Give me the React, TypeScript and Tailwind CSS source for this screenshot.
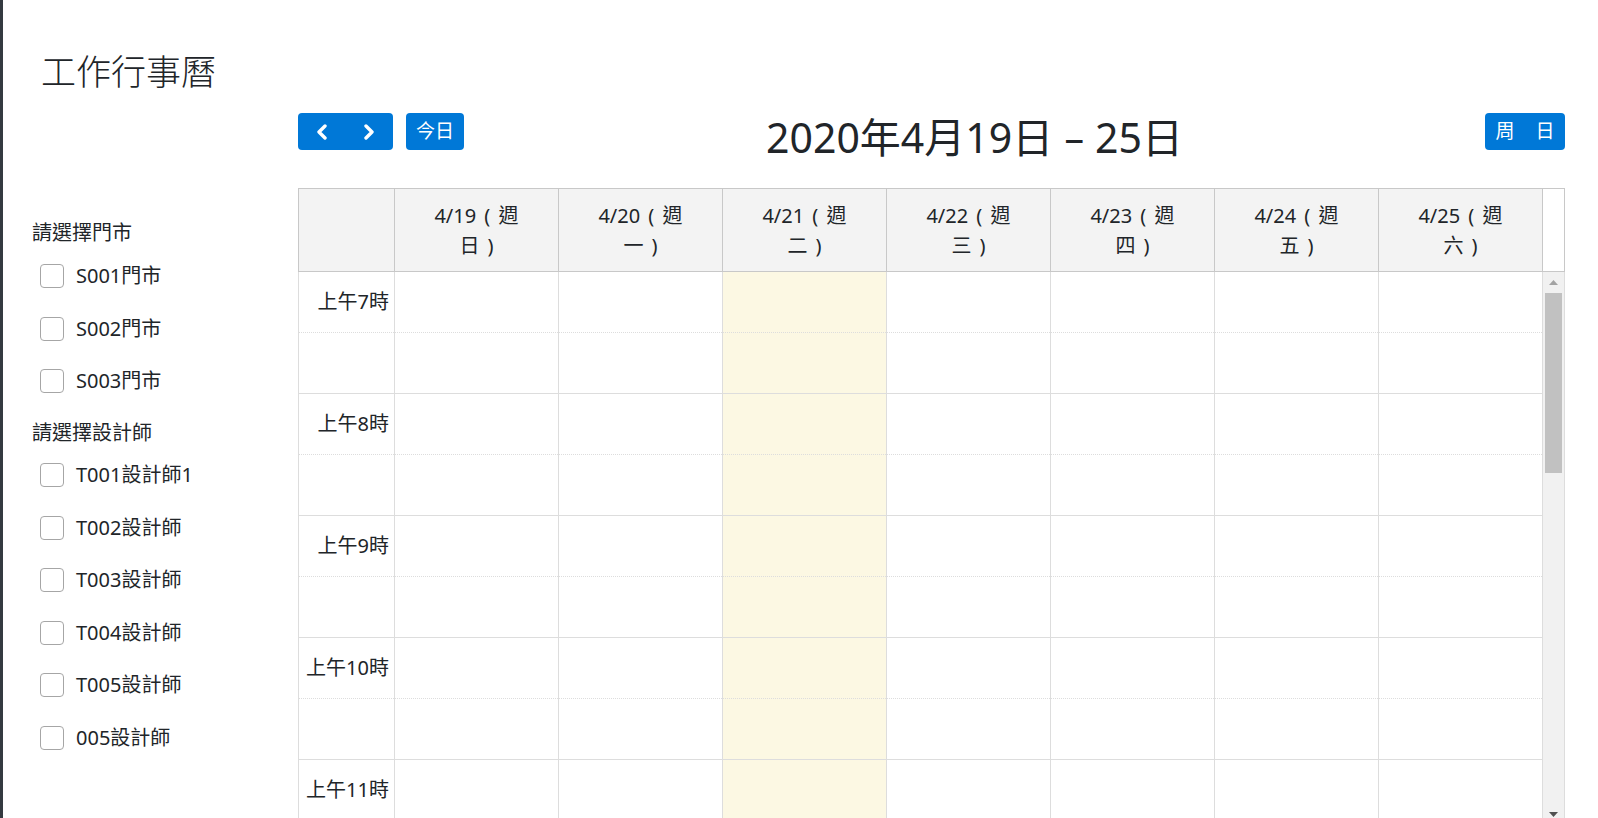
import React from "react";

const days: { l1: string; l2: string; today?: boolean }[] = [
  { l1: "4/19 ( 週", l2: "日 )" },
  { l1: "4/20 ( 週", l2: "一 )" },
  { l1: "4/21 ( 週", l2: "二 )", today: true },
  { l1: "4/22 ( 週", l2: "三 )" },
  { l1: "4/23 ( 週", l2: "四 )" },
  { l1: "4/24 ( 週", l2: "五 )" },
  { l1: "4/25 ( 週", l2: "六 )" },
];

const hours = [7, 8, 9, 10, 11];

const stores = ["S001門市", "S002門市", "S003門市"];
const designers = ["T001設計師1", "T002設計師", "T003設計師", "T004設計師", "T005設計師", "005設計師"];

function CheckItem({ label }: { label: string }) {
  return (
    <label className="flex h-[52.6px] items-center pl-[8px]">
      <span className="h-[24px] w-[24px] shrink-0 rounded-[4px] border border-[#a6a6a6] bg-white" />
      <span className="ml-[12px] text-[20px] leading-[30px]">{label}</span>
    </label>
  );
}

function Chevron({ dir }: { dir: "l" | "r" }) {
  return (
    <svg width="12" height="16" viewBox="0 0 12 16" fill="none">
      <polyline
        points={dir === "l" ? "9,2 3,8 9,14" : "3,2 9,8 3,14"}
        stroke="white"
        strokeWidth="3.4"
        strokeLinecap="round"
        strokeLinejoin="round"
      />
    </svg>
  );
}

function DayColumn({ today }: { today?: boolean }) {
  return (
    <div className={`w-[164px] shrink-0 border-r border-[#dddddd] ${today ? "bg-[#fcf8e3]" : "bg-white"}`}>
      {hours.map((h) => (
        <React.Fragment key={h}>
          <div className="h-[61px] border-b border-dotted border-[#dddddd]" />
          <div className="h-[61px] border-b border-[#dddddd]" />
        </React.Fragment>
      ))}
    </div>
  );
}

export default function App() {
  return (
    <div className="flex h-[818px] w-full overflow-hidden bg-white text-[#212529] [font-family:'Noto_Sans','Noto_Sans_CJK_TC',sans-serif]">
      <div className="w-[3px] shrink-0 bg-[#343a40]" />
      <div className="flex min-w-0 flex-1 flex-col">
        <h1 className="pl-[38px] pt-[51px] text-[35px] font-light leading-[42px]">工作行事曆</h1>
        <div className="mt-[20px] flex">
          <aside className="w-[295px] shrink-0 pl-[29px] pt-[105px]">
            <div className="text-[20px] leading-[30px]">請選擇門市</div>
            <div className="mt-[2px]">
              {stores.map((s) => (
                <CheckItem key={s} label={s} />
              ))}
            </div>
            <div className="mt-[10px] text-[20px] leading-[30px]">請選擇設計師</div>
            <div className="mt-[1px]">
              {designers.map((s) => (
                <CheckItem key={s} label={s} />
              ))}
            </div>
          </aside>
          <section className="min-w-0 flex-1 pr-[33px]">
            <div className="flex h-[75px] items-start justify-between">
              <div className="flex gap-[13px]">
                <div className="flex h-[37px] w-[95px] overflow-hidden rounded-[4px] bg-[#0078d7]">
                  <button className="flex flex-1 items-center justify-center">
                    <Chevron dir="l" />
                  </button>
                  <button className="flex flex-1 items-center justify-center">
                    <Chevron dir="r" />
                  </button>
                </div>
                <button className="flex h-[37px] w-[58px] items-center justify-center rounded-[4px] bg-[#0078d7] text-[19px] text-white">
                  今日
                </button>
              </div>
              <h2 className="text-[41px] font-normal leading-[48px]">
                2020年4月19日 <span className="[font-family:'DejaVu_Sans',sans-serif]">–</span> 25日
              </h2>
              <div className="flex h-[37px] w-[80px] overflow-hidden rounded-[4px] bg-[#0078d7] text-[19px] text-white">
                <button className="flex flex-1 items-center justify-center">周</button>
                <button className="flex flex-1 items-center justify-center">日</button>
              </div>
            </div>
            {/* header */}
            <div className="flex h-[84px] border-y border-l border-[#c8c8c8] bg-[#f3f3f3]">
              <div className="w-[96px] shrink-0 border-r border-[#c8c8c8]" />
              {days.map((d) => (
                <div
                  key={d.l1}
                  className="flex w-[164px] shrink-0 flex-col items-center justify-center whitespace-pre border-r border-[#c8c8c8] pt-[2px] text-[20px] leading-[30px] [word-spacing:3px]"
                >
                  <div>{d.l1}</div>
                  <div>{d.l2}</div>
                </div>
              ))}
              <div className="w-[22px] shrink-0 border-r border-[#c8c8c8] bg-white" />
            </div>
            {/* body */}
            <div className="flex h-[553px] overflow-hidden border-l border-[#dddddd]">
              <div className="w-[96px] shrink-0 border-r border-[#dddddd]">
                {hours.map((h) => (
                  <React.Fragment key={h}>
                    <div className="flex h-[61px] items-center justify-end border-b border-dotted border-[#dddddd] pr-[5px] text-[20px]">
                      上午{h}時
                    </div>
                    <div className="h-[61px] border-b border-[#dddddd]" />
                  </React.Fragment>
                ))}
              </div>
              {days.map((d) => (
                <DayColumn key={d.l1} today={d.today} />
              ))}
              <div className="flex w-[22px] shrink-0 flex-col border-r border-[#dddddd] bg-[#f1f1f1]">
                <div className="flex h-[21px] items-center justify-center">
                  <svg width="9" height="5" viewBox="0 0 9 5">
                    <polygon points="0,5 4.5,0 9,5" fill="#a3a3a3" />
                  </svg>
                </div>
                <div className="ml-[2px] h-[180px] w-[17px] bg-[#c1c1c1]" />
                <div className="flex-1" />
                <div className="flex h-[21px] items-center justify-center">
                  <svg width="9" height="5" viewBox="0 0 9 5">
                    <polygon points="0,0 9,0 4.5,5" fill="#505050" />
                  </svg>
                </div>
              </div>
            </div>
          </section>
        </div>
      </div>
    </div>
  );
}
